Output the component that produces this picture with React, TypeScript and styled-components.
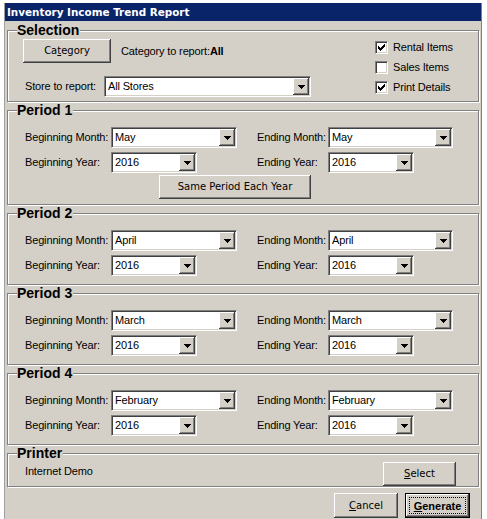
import React from 'react'
import styled, { createGlobalStyle } from 'styled-components'

const FACE = '#d4d0c8'
const SANS = "'Liberation Sans', Arial, sans-serif"
const UI = "'DejaVu Sans', Tahoma, sans-serif"

const GlobalStyle = createGlobalStyle`
  html, body {
    margin: 0;
    padding: 0;
    background: #fff;
  }
  body {
    font-family: ${SANS};
    font-size: 11px;
    color: #000;
    overflow: hidden;
  }
`

interface Period {
  title: string
  month: string
  year: string
}

const periods: Period[] = [
  { title: 'Period 1', month: 'May', year: '2016' },
  { title: 'Period 2', month: 'April', year: '2016' },
  { title: 'Period 3', month: 'March', year: '2016' },
  { title: 'Period 4', month: 'February', year: '2016' },
]

const ArrowIcon = () => (
  <svg width="7" height="4" viewBox="0 0 7 4" shapeRendering="crispEdges">
    <path d="M0 0H7V1H6V2H5V3H4V4H3V3H2V2H1V1H0Z" fill="#000" />
  </svg>
)

const CheckIcon = () => (
  <svg width="7" height="7" viewBox="0 0 7 7" shapeRendering="crispEdges">
    <path
      d="M6 0h1v1h-1z M5 1h2v1h-2z M0 2h1v1h-1z M4 2h3v1h-3z M0 3h2v1h-2z M3 3h3v1h-3z M0 4h5v1h-5z M1 5h3v1h-3z M2 6h1v1h-1z"
      fill="#000"
    />
  </svg>
)

const Combo: React.FC<{ value: string; width: number }> = ({ value, width }) => (
  <ComboBox $width={width}>
    <ComboValue>{value}</ComboValue>
    <DropButton>
      <ArrowIcon />
    </DropButton>
  </ComboBox>
)

const Check: React.FC<{ label: string; checked?: boolean }> = ({ label, checked }) => (
  <CheckRow>
    <CheckBox>{checked && <CheckIcon />}</CheckBox>
    <span>{label}</span>
  </CheckRow>
)

export default function App() {
  return (
    <>
      <GlobalStyle />
      <Window>
        <TitleBar>Inventory Income Trend Report</TitleBar>
        <Body>
          <GroupBox>
            <Legend>Selection</Legend>
            <SelectionBody>
              <SelectionMain>
                <CategoryRow>
                  <Button $w={88} $h={24}>
                    Ca<u>t</u>egory
                  </Button>
                  <Label>
                    Category to report:<b>All</b>
                  </Label>
                </CategoryRow>
                <StoreRow>
                  <StoreLabel>Store to report:</StoreLabel>
                  <Combo width={207} value="All Stores" />
                </StoreRow>
              </SelectionMain>
              <CheckList>
                <Check label="Rental Items" checked />
                <Check label="Sales Items" />
                <Check label="Print Details" checked />
              </CheckList>
            </SelectionBody>
          </GroupBox>

          {periods.map((p, idx) => (
            <GroupBox key={p.title}>
              <Legend>{p.title}</Legend>
              <PeriodBody $pb={idx === 0 ? 5 : 8}>
                <PeriodGrid>
                  <Label>Beginning Month:</Label>
                  <Combo width={126} value={p.month} />
                  <Label>Ending Month:</Label>
                  <Combo width={125} value={p.month} />
                  <Label>Beginning Year:</Label>
                  <Combo width={86} value={p.year} />
                  <Label>Ending Year:</Label>
                  <Combo width={86} value={p.year} />
                </PeriodGrid>
                {idx === 0 && (
                  <SameButton $w={152} $h={24}>
                    Same Period Each Year
                  </SameButton>
                )}
              </PeriodBody>
            </GroupBox>
          ))}

          <GroupBox>
            <Legend>Printer</Legend>
            <PrinterBody>
              <PrinterName>Internet Demo</PrinterName>
              <SelectButton $w={73} $h={24}>
                <u>S</u>elect
              </SelectButton>
            </PrinterBody>
          </GroupBox>

          <Footer>
            <Button $w={64} $h={25}>
              <u>C</u>ancel
            </Button>
            <DefaultButton $w={65} $h={25}>
              <FocusRing>
                <u>G</u>enerate
              </FocusRing>
            </DefaultButton>
          </Footer>
        </Body>
      </Window>
    </>
  )
}

const Window = styled.div`
  margin: 3px 0 0 4px;
  width: 478px;
  height: 516px;
  box-sizing: border-box;
  background: ${FACE};
  border-left: 1px solid #a0a0a0;
  border-right: 1px solid #808080;
  overflow: hidden;
`

const TitleBar = styled.div`
  height: 18px;
  padding-left: 2px;
  background: #0a246a;
  color: #fff;
  font: bold 10.4px/18px ${UI};
  white-space: nowrap;
`

const Body = styled.div`
  padding: 2px 2px 0 2px;
`

const GroupBox = styled.fieldset`
  margin: 0 0 1px;
  padding: 0;
  min-width: 0;
  border: 1px solid #808080;
  box-shadow: inset 1px 1px #fff, 1px 1px #fff;
`

const Legend = styled.legend`
  margin-left: 9px;
  padding: 0 1px 0 0;
  font: bold 14px/14px ${SANS};
  background: ${FACE};
  color: #000;
`

const Label = styled.span`
  font: 11px/13px ${SANS};
  letter-spacing: -0.15px;
  white-space: nowrap;

  b {
    font-weight: bold;
  }
`

const SelectionBody = styled.div`
  display: flex;
  padding: 2px 0 4px 15px;
`

const SelectionMain = styled.div`
  width: 352px;
`

const CategoryRow = styled.div`
  display: flex;
  align-items: center;
  gap: 10px;
`

const StoreRow = styled.div`
  display: flex;
  align-items: center;
  margin-top: 13px;
  padding-left: 2px;
`

const StoreLabel = styled(Label)`
  width: 79px;
`

const CheckList = styled.div`
  display: flex;
  flex-direction: column;
  gap: 3px;
`

const CheckRow = styled.div`
  display: flex;
  align-items: center;
  gap: 5px;
  height: 17px;
  font: 11px/13px ${SANS};
  letter-spacing: -0.15px;
`

const CheckBox = styled.span`
  display: flex;
  align-items: center;
  justify-content: center;
  width: 13px;
  height: 13px;
  box-sizing: border-box;
  background: #fff;
  border: 1px solid;
  border-color: #808080 #fff #fff #808080;
  box-shadow: inset 1px 1px #404040, inset -1px -1px ${FACE};
`

const ComboBox = styled.div<{ $width: number }>`
  display: flex;
  width: ${(p) => p.$width}px;
  height: 21px;
  box-sizing: border-box;
  padding: 1px;
  background: #fff;
  border: 1px solid;
  border-color: #808080 #fff #fff #808080;
  box-shadow: inset 1px 1px #404040, inset -1px -1px ${FACE};
`

const ComboValue = styled.span`
  flex: 1;
  padding-left: 2px;
  font: 11px/17px ${SANS};
  letter-spacing: -0.15px;
  white-space: nowrap;
  overflow: hidden;
`

const DropButton = styled.span`
  display: flex;
  align-items: center;
  justify-content: center;
  width: 16px;
  background: ${FACE};
  box-shadow: inset -1px -1px #404040, inset 1px 1px #fff, inset -2px -2px #808080;
`

const PeriodBody = styled.div<{ $pb: number }>`
  padding: 10px 0 ${(p) => p.$pb}px 17px;
`

const PeriodGrid = styled.div`
  display: grid;
  grid-template-columns: 86px 146px 71px 125px;
  grid-auto-rows: 21px;
  row-gap: 4px;
  align-items: center;
`

const Button = styled.button<{ $w: number; $h: number }>`
  display: flex;
  align-items: center;
  justify-content: center;
  width: ${(p) => p.$w}px;
  height: ${(p) => p.$h}px;
  box-sizing: border-box;
  padding: 0;
  border: none;
  background: ${FACE};
  box-shadow: inset -1px -1px #404040, inset 1px 1px #fff, inset -2px -2px #808080;
  font: 10px/12px ${UI};
  color: #000;
  white-space: nowrap;
`

const SameButton = styled(Button)`
  margin: 2px 0 0 134px;
`

const SelectButton = styled(Button)`
  margin-left: auto;
`

const DefaultButton = styled(Button)`
  padding: 3px;
  border: 1px solid #000;
  align-items: stretch;
  font: bold 11px/12px ${SANS};
`

const FocusRing = styled.span`
  flex: 1;
  display: flex;
  align-items: center;
  justify-content: center;
  border: 1px dotted #000;
`

const PrinterBody = styled.div`
  display: flex;
  align-items: flex-start;
  padding: 2px 22px 0 17px;
`

const PrinterName = styled(Label)`
  padding-top: 3px;
`

const Footer = styled.div`
  display: flex;
  justify-content: flex-end;
  gap: 7px;
  padding: 5px 9px 0 0;
`
